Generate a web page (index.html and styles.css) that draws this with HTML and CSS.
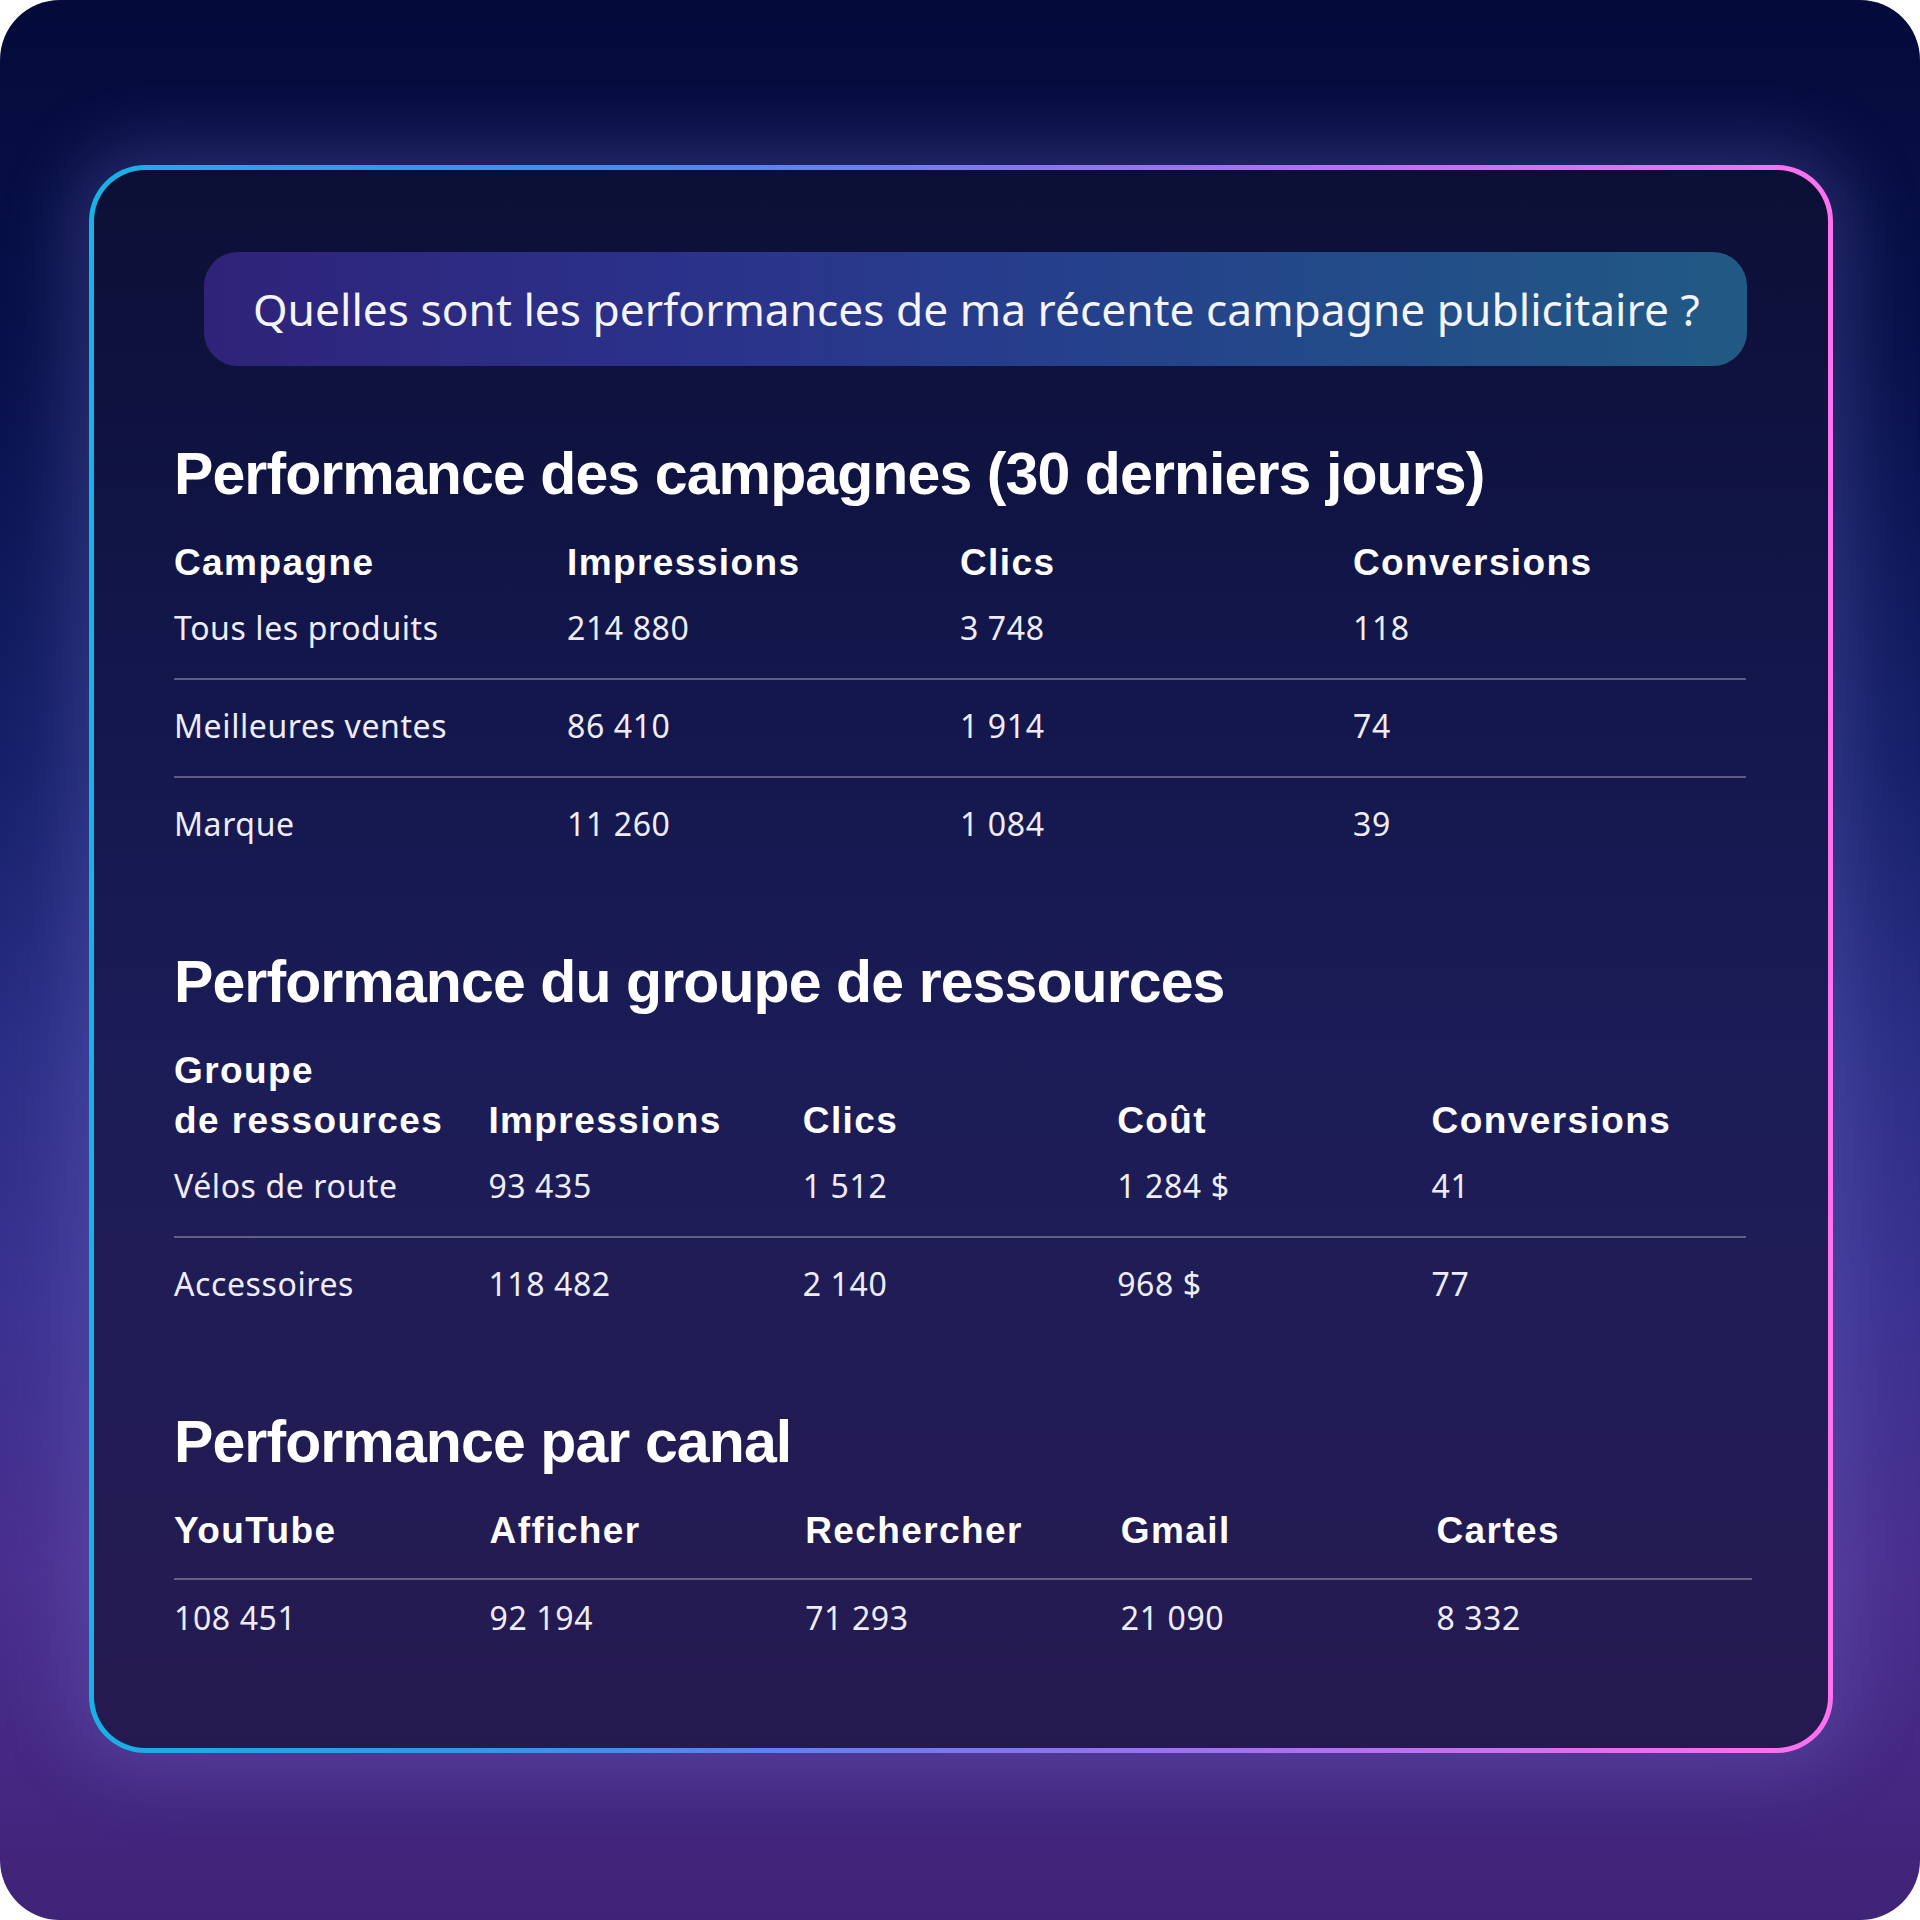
FILE: index.html
```html
<!DOCTYPE html>
<html lang="fr">
<head>
<meta charset="utf-8">
<title>Performance des campagnes</title>
<link rel="stylesheet" href="styles.css">
</head>
<body>
<div class="frame">
  <div class="card">
    <div class="bubble">Quelles sont les performances de ma récente campagne publicitaire ?</div>

    <section class="sec">
      <h2 class="title">Performance des campagnes (30 derniers jours)</h2>
      <div class="tbl">
        <div class="thead cols4"><span>Campagne</span><span>Impressions</span><span>Clics</span><span>Conversions</span></div>
        <div class="row cols4 ruled"><span>Tous les produits</span><span>214 880</span><span>3 748</span><span>118</span></div>
        <div class="row cols4 ruled"><span>Meilleures ventes</span><span>86 410</span><span>1 914</span><span>74</span></div>
        <div class="row cols4"><span>Marque</span><span>11 260</span><span>1 084</span><span>39</span></div>
      </div>
    </section>

    <section class="sec">
      <h2 class="title">Performance du groupe de ressources</h2>
      <div class="tbl">
        <div class="thead cols5 bottom"><span>Groupe<br>de ressources</span><span>Impressions</span><span>Clics</span><span>Coût</span><span>Conversions</span></div>
        <div class="row cols5 ruled"><span>Vélos de route</span><span>93 435</span><span>1 512</span><span>1 284 $</span><span>41</span></div>
        <div class="row cols5"><span>Accessoires</span><span>118 482</span><span>2 140</span><span>968 $</span><span>77</span></div>
      </div>
    </section>

    <section class="sec">
      <h2 class="title">Performance par canal</h2>
      <div class="tbl wide">
        <div class="thead cols5 lined"><span>YouTube</span><span>Afficher</span><span>Rechercher</span><span>Gmail</span><span>Cartes</span></div>
        <div class="row cols5 after-line"><span>108 451</span><span>92 194</span><span>71 293</span><span>21 090</span><span>8 332</span></div>
      </div>
    </section>
  </div>
</div>
</body>
</html>
```

FILE: styles.css
```css
html, body {
  margin: 0;
  padding: 0;
  background: #ffffff;
}

.frame {
  box-sizing: border-box;
  width: 1920px;
  height: 1920px;
  border-radius: 60px;
  overflow: hidden;
  padding: 165px 0 0 89px;
  background: linear-gradient(180deg, #040b3b 0%, #08114a 18%, #16216a 40%, #2c2f86 55%, #3b3291 68%, #4a2f8e 82%, #452883 92%, #3e2376 100%);
}

.card {
  box-sizing: border-box;
  width: 1744px;
  height: 1588px;
  border: 5px solid transparent;
  border-radius: 56px;
  padding: 82px 82px 0 80px;
  background:
    linear-gradient(180deg, #0c0f35 0%, #12164a 30%, #1b1c57 55%, #211c55 75%, #251a50 100%) padding-box,
    linear-gradient(90deg, #17b2e6 0%, #3396ee 18%, #5a82f2 38%, #8a74f2 55%, #b470f2 72%, #e270f0 88%, #ff72ef 100%) border-box;
  box-shadow: 0 0 70px 18px rgba(120, 115, 210, 0.30);
}

.bubble {
  box-sizing: border-box;
  height: 114px;
  margin-left: 30px;
  margin-right: -1px;
  padding-left: 49px;
  border-radius: 34px;
  background: linear-gradient(90deg, #2f2379 0%, #2b318a 30%, #263f8c 55%, #224d88 78%, #215a84 100%);
  color: #f4f4fb;
  font-family: "Noto Sans", "Open Sans", sans-serif;
  font-size: 44.3px;
  line-height: 114px;
  white-space: nowrap;
}

.title {
  margin: 78px 0 0;
  font-family: "Liberation Sans", Arial, sans-serif;
  font-weight: 700;
  font-size: 59px;
  line-height: 60px;
  letter-spacing: -0.9px;
  color: #ffffff;
}

.tbl {
  margin-top: 34px;
}

.tbl.wide {
  margin-right: -6px;
}

.cols4 {
  display: grid;
  grid-template-columns: repeat(4, 1fr);
}

.cols5 {
  display: grid;
  grid-template-columns: repeat(5, 1fr);
}

.thead {
  font-family: "Liberation Sans", Arial, sans-serif;
  font-weight: 700;
  font-size: 37px;
  line-height: 50px;
  letter-spacing: 1.4px;
  color: #ffffff;
}

.thead.bottom {
  align-items: end;
}

.thead.lined {
  padding-bottom: 22px;
  border-bottom: 2px solid rgba(255, 255, 255, 0.3);
}

.row {
  padding: 26px 0 30px;
  font-family: "Noto Sans", "Open Sans", sans-serif;
  font-size: 32px;
  line-height: 40px;
  letter-spacing: 0.6px;
  color: #eeedf7;
}

.thead + .row {
  padding-top: 20px;
}

.row.ruled {
  border-bottom: 2px solid rgba(255, 255, 255, 0.3);
}

.thead.lined + .row.after-line {
  padding-top: 18px;
}
```
